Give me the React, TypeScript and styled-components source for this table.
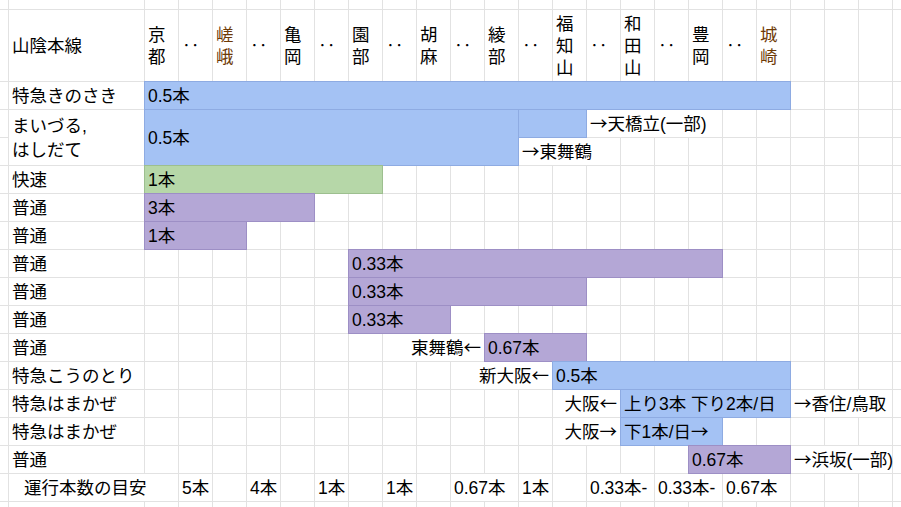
import React from 'react'
import styled, { createGlobalStyle } from 'styled-components'

type Fill = 'blue' | 'green' | 'purple'

interface Seg {
  span?: number
  rows?: number
  text?: string
  fill?: Fill
  right?: boolean
  indent?: boolean
}

const GRID_LINE = '#e2e2e2'
const COLUMN_COUNT = 25

const palette: Record<Fill, { bg: string; edge: string }> = {
  blue: { bg: '#a4c2f4', edge: '#8eabe2' },
  green: { bg: '#b6d7a8', edge: '#9dbf8f' },
  purple: { bg: '#b4a7d6', edge: '#9d8fc5' },
}

const blank = (n: number): Seg[] => Array.from({ length: n }, () => ({}))

const stations = [
  { name: '京都' },
  { name: '嵯峨', accent: true },
  { name: '亀岡' },
  { name: '園部' },
  { name: '胡麻' },
  { name: '綾部' },
  { name: '福知山' },
  { name: '和田山' },
  { name: '豊岡' },
  { name: '城崎', accent: true },
]

// each row starts at column A (the lead column is added when rendering)
const rows: Seg[][] = [
  [{ text: '特急きのさき' }, { span: 19, fill: 'blue', text: '0.5本' }, ...blank(4)],
  [
    { text: 'まいづる,\nはしだて', rows: 2 },
    { span: 11, rows: 2, fill: 'blue', text: '0.5本' },
    { span: 2, fill: 'blue' },
    { span: 4, text: '→天橋立(一部)' },
    ...blank(6),
  ],
  [{ span: 3, text: '→東舞鶴' }, ...blank(9)],
  [{ text: '快速' }, { span: 7, fill: 'green', text: '1本' }, ...blank(16)],
  [{ text: '普通' }, { span: 5, fill: 'purple', text: '3本' }, ...blank(18)],
  [{ text: '普通' }, { span: 3, fill: 'purple', text: '1本' }, ...blank(20)],
  [{ text: '普通' }, ...blank(6), { span: 11, fill: 'purple', text: '0.33本' }, ...blank(6)],
  [{ text: '普通' }, ...blank(6), { span: 7, fill: 'purple', text: '0.33本' }, ...blank(10)],
  [{ text: '普通' }, ...blank(6), { span: 3, fill: 'purple', text: '0.33本' }, ...blank(14)],
  [
    { text: '普通' },
    ...blank(7),
    { span: 3, right: true, text: '東舞鶴←' },
    { span: 3, fill: 'purple', text: '0.67本' },
    ...blank(10),
  ],
  [
    { text: '特急こうのとり' },
    ...blank(9),
    { span: 3, right: true, text: '新大阪←' },
    { span: 7, fill: 'blue', text: '0.5本' },
    ...blank(4),
  ],
  [
    { text: '特急はまかぜ' },
    ...blank(12),
    { span: 2, right: true, text: '大阪←' },
    { span: 5, fill: 'blue', text: '上り3本 下り2本/日' },
    { span: 3, text: '→香住/鳥取' },
    ...blank(1),
  ],
  [
    { text: '特急はまかぜ' },
    ...blank(12),
    { span: 2, right: true, text: '大阪→' },
    { span: 3, fill: 'blue', text: '下1本/日→' },
    ...blank(6),
  ],
  [
    { text: '普通' },
    ...blank(16),
    { span: 3, fill: 'purple', text: '0.67本' },
    { span: 3, text: '→浜坂(一部)' },
    ...blank(1),
  ],
  [
    { span: 2, indent: true, text: '運行本数の目安' },
    { text: '5本' },
    {},
    { text: '4本' },
    {},
    { text: '1本' },
    {},
    { text: '1本' },
    {},
    { span: 2, text: '0.67本' },
    { text: '1本' },
    {},
    { span: 2, text: '0.33本-' },
    { span: 2, text: '0.33本-' },
    { span: 2, text: '0.67本' },
    ...blank(4),
  ],
]

const GlobalStyle = createGlobalStyle`
  html, body {
    margin: 0;
    padding: 0;
    background: #ffffff;
    overflow: hidden;
  }
  body {
    font-family: "Liberation Sans", "Noto Sans CJK JP", sans-serif;
    color: #000000;
  }
`

const Viewport = styled.div`
  width: 901px;
  height: 507px;
  overflow: hidden;
`

const Sheet = styled.div`
  display: grid;
  grid-template-columns: 9px 136px repeat(23, 34px);
  grid-template-rows: 10px 72px repeat(16, 28px);
  width: max-content;
  font-size: 17.5px;
  line-height: 24px;
`

const Cell = styled.div<{ $span?: number; $rows?: number; $fill?: Fill; $right?: boolean; $indent?: boolean }>`
  grid-column: span ${(p) => p.$span ?? 1};
  grid-row: span ${(p) => p.$rows ?? 1};
  box-sizing: border-box;
  display: flex;
  align-items: center;
  justify-content: ${(p) => (p.$right ? 'flex-end' : 'flex-start')};
  padding: 0 3px 0 ${(p) => (p.$indent ? '15px' : '3px')};
  white-space: pre;
  min-width: 0;
  background: ${(p) => (p.$fill ? palette[p.$fill].bg : 'transparent')};
  border-right: 1px solid ${(p) => (p.$fill ? palette[p.$fill].edge : GRID_LINE)};
  border-bottom: 1px solid ${(p) => (p.$fill ? palette[p.$fill].edge : GRID_LINE)};
  box-shadow: ${(p) =>
    p.$fill
      ? `-1px 0 0 0 ${palette[p.$fill].edge}, 0 -1px 0 0 ${palette[p.$fill].edge}, -1px -1px 0 0 ${palette[p.$fill].edge}`
      : 'none'};
`

// arrows come from the CJK face so they are full width, as in the sheet
const Arrow = styled.span`
  font-family: "Noto Sans CJK JP", sans-serif;
`

const StationCell = styled.div`
  box-sizing: border-box;
  display: flex;
  flex-direction: column;
  justify-content: center;
  padding: 0 3px;
  border-right: 1px solid ${GRID_LINE};
  border-bottom: 1px solid ${GRID_LINE};
`

const Glyph = styled.span<{ $accent?: boolean }>`
  display: block;
  line-height: 22px;
  color: ${(p) => (p.$accent ? '#6e3a06' : '#000000')};
`

const CellText: React.FC<{ text?: string }> = ({ text }) => {
  if (!text) return null
  const parts = text.split(/([←→])/)
  return (
    <span>
      {parts.map((part, i) => (part === '←' || part === '→' ? <Arrow key={i}>{part}</Arrow> : part))}
    </span>
  )
}

const BlankRow: React.FC = () => (
  <>
    {Array.from({ length: COLUMN_COUNT }, (_, i) => (
      <Cell key={i} />
    ))}
  </>
)

const HeaderRow: React.FC = () => (
  <>
    <Cell />
    <Cell>山陰本線</Cell>
    {stations.map((s, i) => (
      <React.Fragment key={s.name}>
        <StationCell>
          {s.name.split('').map((c, j) => (
            <Glyph key={j} $accent={s.accent}>
              {c}
            </Glyph>
          ))}
        </StationCell>
        {i < stations.length - 1 && <Cell>‥</Cell>}
      </React.Fragment>
    ))}
    {blank(4).map((_, i) => (
      <Cell key={`x${i}`} />
    ))}
  </>
)

const App: React.FC = () => {
  return (
    <Viewport>
      <GlobalStyle />
      <Sheet>
        <BlankRow />
        <HeaderRow />
        {rows.map((segs, r) => (
          <React.Fragment key={r}>
            <Cell />
            {segs.map((seg, i) => (
              <Cell
                key={i}
                $span={seg.span}
                $rows={seg.rows}
                $fill={seg.fill}
                $right={seg.right}
                $indent={seg.indent}
              >
                <CellText text={seg.text} />
              </Cell>
            ))}
          </React.Fragment>
        ))}
        <BlankRow />
      </Sheet>
    </Viewport>
  )
}

export default App
